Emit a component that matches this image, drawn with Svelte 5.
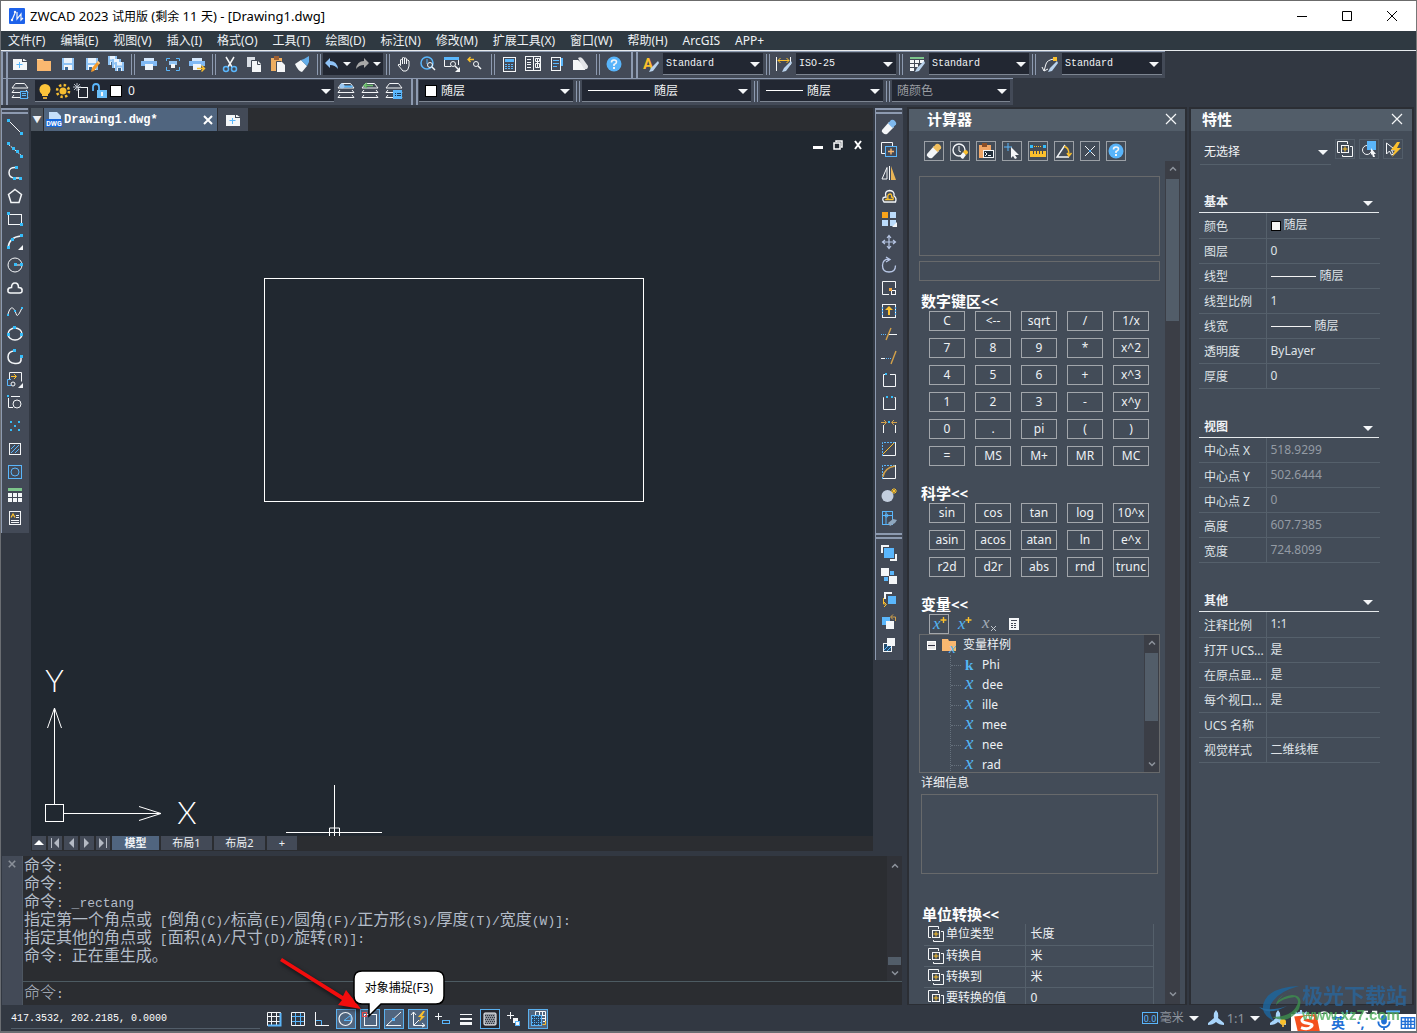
<script>
  const W = '#f4f6f8', B = '#5ab6fb', C = '#36bdfa', Y = '#fbc02d', O = '#f9b870', D = '#434a57';
  const r = (x, y, w, h, fill) => `<rect x="${x}" y="${y}" width="${w}" height="${h}" fill="${fill}"/>`;
  const b = (x, y, w, h, stroke, fill = 'none') => `<rect x="${x + 0.5}" y="${y + 0.5}" width="${w - 1}" height="${h - 1}" stroke="${stroke}" fill="${fill}"/>`;
  const p = (d, stroke = W, w = 1, extra = '') => `<path d="${d}" stroke="${stroke}" stroke-width="${w}" fill="none" ${extra}/>`;
  const f = (d, fill = W) => `<path d="${d}" fill="${fill}"/>`;
  const c = (x, y, rad, stroke = 'none', fill = 'none', w = 1) => `<circle cx="${x}" cy="${y}" r="${rad}" stroke="${stroke}" fill="${fill}" stroke-width="${w}"/>`;
  const dot = (x, y, fill = C) => r(x, y, 3, 3, fill);
  const disk = (x, y, s) => f(`M${x} ${y}h${s}v${s}h-${s}z`, '#8fc3f5') + r(x + 2, y, s - 4, s / 2 - 1, '#e8f2fc') + r(x + 2, y + s / 2 + 1, s - 4, s / 2 - 1, W) + r(x + 3, y + s - 3, 3, 3, '#3c6a99');
  const eraser = (a, z) => f('M1 11L8 3L13 8L6 15Q4 16 2 14Q0 12.500 1 11z', a) + f('M7 4.500L10 1Q12 0 14 2Q16 4 15 5.500L11.500 9z', z);
  const lens = (x, y) => c(x, y, 2.5, W) + p(`M${x + 2} ${y + 2}l3 3`, W, 1.4);
  const printer = r(3, 2, 10, 3, '#d5e7fb') + r(0, 5, 16, 5, '#80b9f5') + r(4, 8, 8, 6, '#edf4fc');
  const layers = f('M3 0h10l4 6H-1z', D) + p('M3.500 .5h9l3.500 4.500H0zM2 7L0 9.500h16L14 7M2 12l-2 2.500h16L14 12');
  const brush = f('M15 5l1 2-6 8-4 1 2-4z', '#b9d2ec');
  const multi = p('M3 11.500H.5v-11h10V3') + b(4, 4, 8, 8, W) + p('M13 5.500h2.500v10h-10V14') + p('M8 5.500v5M5.500 8h5', Y);
  const grid = (col) => p('M1.500 1.500h13v13h-13zM5.500 1v14M10.500 1v14M1 5.500h14M1 10.500h14', col);
  const help = c(8, 8, 7.500, 'none', '#58b4fa') + p('M5.500 6.500Q5.500 4 8 4Q10.500 4 10.500 6Q10.500 7.500 8 8.500V10', W, 1.6) + r(7, 11, 2, 2, W);
  const bolt = f('M12 1L6 9h4l-3 7 9-9h-4l3-6z', Y);
  const anno = f('M8 0q3 3 2 8l6 5v2q-5 0-8-3-3 3-8 3v-2l6-5Q5 3 8 0z', '#a8d4fa');

  const icons = {
    logo: `<rect width="16" height="16" rx="1" fill="#1d62ea"/>` + p('M3 12L6 5M8 4v7l4-5v6l2-2', W, 1.200) + c(6, 4, 1.200, 'none', W) + c(3, 12, 1.200, 'none', W),
    new: f('M1 3h9v3h5v8H1z') + f('M11 3h1l3 2h-4z') + p('M7.500 6v6M4.500 8.500h6', B),
    open: f('M1 3h6l1 2h7v10H1z', O) + r(1, 3, 5, 1, '#ffdca5'),
    save: disk(2, 2, 12),
    saveas: disk(2, 2, 12) + f('M14 5l2 2-6 8-3 1 1-4z', '#f49b2c') + f('M14 5l2 2-1 1-2-2z', '#fbd5a2'),
    saveall: disk(0, 0, 9) + disk(4, 3, 9) + disk(7, 6, 9),
    print: printer,
    preview: p('M1.500 5V2.500H5M11 2.500h3.500V5M14.500 11v3.500H11M5 14.500H1.500V11', B) + r(4, 5, 8, 4, '#8fc3f5') + r(6, 8, 4, 4, W),
    plot: printer + p('M8 12.500h7M12.500 9.500l3 3-3 3', Y, 1.4),
    cut: p('M4 1l6 10M12 1L6 11', W, 1.5) + c(4, 13, 2.500, B, 'none', 1.5) + c(12, 13, 2.500, B, 'none', 1.5),
    copy: f('M1 1h8v10H1z', '#d9dee5') + f('M6 5h6l3 3v8H6z') + p('M5.500 12V4.500h7M11.500 5v3.500h3', D),
    paste: f('M1 2h11v13H1z', '#edae61') + r(4, 0, 5, 4, '#9d5f33') + f('M7 6h5l3 3v7H7z') + p('M6.500 15V5.500h5', D),
    match: f('M1 8l6-4 6 6-5 6q-4-1-7-8z') + f('M7 4l3-1 5-3v6l-2 4z', '#64aeea'),
    undo: f('M1 7l5-5v3q7 0 8 8-3-4-8-4v3z', '#8fc3f7'),
    redo: f('M15 7l-5-5v3Q3 5 2 13q3-4 8-4v3z', '#a8a8a8'),
    down: f('M3 6h10l-5 5z'),
    drop: f('M4 6h8l-4 4z'),
    hand: p('M4.500 9.500V4Q5.500 2 6.500 4V8M6.500 7V2Q7.500 0 8.500 2V8M8.500 7V2.500Q10 1 10.500 3V8M10.500 7V4.500Q12 3 13 5V10Q12 15 10 15H7L2 9Q3 7 4.500 9.500'),
    zoomrt: c(7, 7, 6, B, 'none', 1.500) + p('M7 3v5', B) + lens(10, 9),
    zoomwin: r(0, 1, 15, 3, B) + p('M.5 4v6.500H7M14.500 4v5') + lens(9, 8) + f('M16 11v5h-5z'),
    zoomprev: p('M6 3.500H0M2.500 1L0 3.500 2.500 6', Y, 1.300) + lens(8, 8),
    props: b(2, 1, 13, 15, W) + r(4, 3, 9, 3, B) + p('M4 8.500h9M4 10.500h9M4 12.500h9', B, 1, 'stroke-dasharray="2 1"'),
    design: b(0, 0, 16, 15, W) + p('M8.500 0v15M2 3.500h4M2 6.500h4M2 8.500h4M2 11.500h4') + p('M10.500 2.500h4v3h-4zM10.500 7.500h4v4h-4zM12.500 2v10'),
    palette: b(2, 1, 10, 14, W) + r(12, 2, 2, 8, B) + p('M4 4.500h6M4 7.500h6M4 10.500h4', B),
    sheet: f('M0 4h5l7 6v4H0z') + f('M5 2q3-2 5 1l5 7q0 4-4 3z', '#e2e4e8'),
    help,
    textstyle: `<text x="0" y="13" font-size="15" font-weight="bold" font-family="Roboto" fill="${Y}">A</text>` + brush,
    dim: p('M.5 1v14M14.500 1v8') + p('M2 4.500h11M4.500 2L2 4.500 4.500 7M10.500 2l2.500 2.500L10.500 7', Y) + brush,
    tablestyle: r(1, 1, 14, 2, '#7dc58b') + r(1, 4, 4, 3, W) + r(6, 4, 4, 3, W) + r(11, 4, 4, 3, W) + r(1, 8, 4, 3, W) + r(6, 8, 3, 3, W) + r(1, 12, 4, 3, W) + brush,
    leader: p('M2 15L4 8Q5 4 12 3M0 11l2 4 4-2') + r(11, 1, 4, 4, Y) + brush,
    layerprops: layers + b(8, 8, 8, 8, B, '#31465c') + p('M10 10.500h4M10 12.500h4', B),
    layercur: layers + p('M2.500 3.500h12', B, 2) + c(4, 3, 2.500, 'none', '#9cc7ef'),
    layerprev: layers + p('M11 2.500H2M5 0L2 2.500 5 5', '#6cc06c', 1.400),
    layerstate: layers + r(7, 7, 9, 9, B) + p('M9 10.500h1M11 10.500h4M9 12.500h1M11 12.500h4', '#173a5a'),
    bulb: c(8, 6.500, 5.500, 'none', '#fdc43a') + r(5, 10, 6, 3, '#fdc43a') + r(6, 14, 4, 2, '#d9a53a'),
    sun: c(8, 8, 3.500, 'none', '#f6bd31') + c(8, 8, 6, '#f6bd31', 'none', 2.500).replace('/>', ' stroke-dasharray="2.400 2.300"/>'),
    freeze: b(5, 4, 10, 11, W) + p('M4 0v8M0 4h8M1 1l6 6M7 1L1 7', '#b8bec8'),
    lock: p('M2 8V4Q2 1 5 1T8 4V8', B, 1.800) + r(6, 7, 10, 8, '#6cc0fa') + r(10, 9, 2, 4, W),
    dwg: f('M3 0h8l4 4v8H3z', '#c5e0fb') + r(0, 7, 16, 8, '#1667dc') + `<text x="8" y="13.500" text-anchor="middle" font-size="7" font-weight="bold" font-family="Roboto" fill="#fff">DWG</text>`,
    line: p('M2 2l12 12') + dot(0, 0) + dot(13, 13),
    xline: p('M1 2l14 12', W, 1, 'stroke-dasharray="3 1"') + dot(0, 0) + dot(5, 5) + dot(9, 8) + dot(13, 13),
    pline: p('M9 2.500Q2 2 2 7.500T8 13h6', W, 1.500) + dot(8, 1) + dot(6, 12) + dot(12, 12),
    polygon: p('M8 1.500l6.500 5-2.500 8H4l-2.500-8z', W, 1.500),
    rect: b(1, 3, 14, 11, W) + dot(0, 1) + dot(13, 12),
    arc: p('M1 14Q2 3 14 2', W, 1.500) + dot(0, 12) + dot(4, 4) + dot(13, 0) + f('M16 11v5h-5z'),
    circle: c(8, 8, 7, W) + p('M8 8h6') + dot(7, 6) + dot(13, 6),
    cloud: p('M3.500 13Q.5 13 1 10 1 7.500 4.500 7.500 4.500 3 8 3T11.500 7.500Q15 7.500 15 10 15.500 13 12.500 13z', W, 1.600),
    spline: p('M1 11Q3 4 5.500 5T9 10.500 13 9L15 5', W) + r(0, 11, 2, 2, C) + r(7, 7, 2, 2, C) + r(14, 4, 2, 2, C),
    ellipse: `<ellipse cx="8" cy="8" rx="7" ry="6" stroke="${W}" fill="none" stroke-width="1.500"/>` + dot(6, 0) + dot(0, 7) + dot(13, 7),
    earc: p('M8 2Q1 2 1 8T8 14.500 14 9', W, 1.500) + dot(6, 0) + dot(13, 6),
    insert: p('M2.500 7V.5h12v9') + p('M4 4.500h5M7 2l2.500 2.500L7 7', Y) + p('M4 7.500H.5v6H4', B) + c(6, 12, 2, W) + f('M16 11v5h-5z'),
    block: p('M1.500 3v9.500H6M4 1.500h9') + r(0, 0, 2, 2, C) + c(10, 9, 4, W),
    points: r(3, 3, 2, 2, C) + r(11, 3, 2, 2, C) + r(7, 7, 2, 2, C) + r(3, 11, 2, 2, C) + r(11, 11, 2, 2, C),
    hatch: b(2, 2, 12, 12, W) + p('M4 8l4-4M4 12l8-8M8 12l4-4', B),
    region: b(1, 1, 14, 14, B) + c(8, 8, 4, B),
    table: r(1, 1, 14, 3, '#7dc58b') + [5, 10].map(y => [1, 6, 11].map(x => r(x, y + 1, 4, 4, W)).join('')).join(''),
    mtext: b(2, 1, 12, 14, W) + p('M4 7.500l2-3.500 2 3.500', Y, 1.300) + p('M9 5.500h3M9 7.500h3M4 10.500h8M4 12.500h8'),
    erase: eraser(W, '#7fb9ee'),
    copyobj: p('M4 11.500H.5v-11h11V4') + b(4, 4, 12, 11, B) + p('M10 6.500v6M7 9.500h6', O, 1.400),
    mirror: p('M6 2.500v11.500H1z') + p('M8.500 1v14') + f('M10 1v14h5z', '#e9b456'),
    offset: p('M3 14Q1 12 2 10 3 9 5 9 3 3 8.500 2.500 14 3 13 8 16 10 14.500 14z', W, 1.300) + p('M5 11.500Q6 10.500 7 11 6 6 9 6 11 6 10.500 9 13 9 12 11.500z', Y, 1.300),
    array: r(1, 1, 6, 6, '#faa41a') + r(9, 1, 6, 6, '#bcdcfb') + r(1, 9, 6, 6, '#bcdcfb') + r(9, 9, 6, 6, '#bcdcfb') + f('M16 11v5h-5z'),
    move: p('M8 2v12M2 8h12M6 4l2-2.500L10 4M6 12l2 2.500 2-2.500M4 6L1.500 8 4 10M12 6l2.500 2L12 10', '#b8c7e6', 1.200),
    rotate: p('M8 2Q1.500 2 1.500 8.500T8 15 14.500 8.500M5 0l4 2.500L5 5', '#b8c7e6', 1.300),
    scale: p('M8 14.500H1.500v-13h13V8') + b(10, 10, 5, 5, W) + dot(8, 8, '#f5a945'),
    stretch: b(1, 1, 14, 14, W) + p('M1.500 4v8M14.500 4v8', B, 1.200, 'stroke-dasharray="2 1"') + f('M8 3l4 4H9v5H7V7H4z', Y),
    trim: p('M0 8.500h6', B, 1, 'stroke-dasharray="1 1"') + p('M8 8.500h8') + p('M5 14L10 2', '#d4a24a', 1.400),
    extend: p('M0 9.500h4') + p('M5 9.500h6', B, 1, 'stroke-dasharray="1 1"') + p('M10 15l5-13', '#d4a24a', 1.400),
    break1: p('M4 2.500H2.500v12h12v-12H9') + r(4, 1, 2, 2, C),
    break2: p('M3 2.500h-.5v12h12v-12h-1') + r(5, 1, 2, 2, C) + r(10, 1, 2, 2, C),
    join: p('M2.500 15V7M14.500 15V7') + p('M0 4.500h5M3 2l2.500 2.500L3 7M16 4.500h-5M13 2l-2.500 2.500L13 7', '#d4a24a') + r(7, 3, 2, 2, C),
    chamfer: p('M1.500 15V1.500H15', B, 1, 'stroke-dasharray="2 1"') + p('M14.500 1v13.500H2') + p('M2 13L13 2', Y),
    fillet: p('M1.500 15V1.500H15', B, 1, 'stroke-dasharray="2 1"') + p('M14.500 1v13.500H2') + p('M2 13Q3 4 14 2', '#d4a24a', 1.400),
    explode: c(6.500, 9, 6, 'none', '#c3cede') + p('M13 1v6M10 4h6M11 2l4 4M15 2l-4 4', Y),
    pedit: b(1, 1, 11, 14, B) + p('M5 1v14M1 5.500h11', B) + c(5.500, 5.500, 1.500, B) + f('M7 13l5-4 4 1-2 3-5 3z', '#8fa7be'),
    front: p('M1 8V1h7', W, 2) + p('M15 9v6H9', W, 2) + r(3, 3, 10, 10, B),
    back: r(0, 0, 8, 8, W) + r(9, 3, 4, 4, B) + r(3, 9, 4, 4, B) + r(8, 8, 8, 8, W),
    above: p('M4 8V2h7', W, 2) + r(7, 5, 8, 8, B) + p('M2.500 7v6H5M3 11l2.500 2.500L3 16', Y),
    under: r(1, 3, 8, 8, B) + r(5, 7, 8, 8, W) + p('M14.500 7V3H10M12 .5L9.500 3 12 5.500', '#d4a24a'),
    hatchback: b(2, 6, 9, 9, W, '#244a6b') + p('M3 13l6-6M6 14l4-4', B) + r(6, 1, 8, 8, W),
    clear: eraser(W, '#f0bf5e'),
    history: c(7, 7, 6, W, 'none', 1.400) + p('M7 3v5l2 1') + f('M8 13l3-4 3 3-3 4q-2 0-3-3z') + f('M11 9l2-2q3 0 3 3l-2 2z', Y),
    pastecalc: f('M1 2h12v13H1z', '#f3a766') + r(4, 0, 5, 4, '#8d4f26') + b(5, 7, 11, 8, W, '#24303c') + p('M7 9l2 2-2 2M10 12.500h3'),
    getpoint: p('M4 0v8M0 4h8', B) + f('M7 4l8 8h-4l2 3-2 1-2-3-2 2z'),
    distance: dot(0, 2) + dot(13, 2) + p('M4 3.500h8', Y, 1, 'stroke-dasharray="1 1"') + r(0, 8, 16, 6, Y) + p('M3.500 8v3M6.500 8v3M9.500 8v3M12.500 8v3', D),
    angle: p('M9 2L1 14h12', W, 1.400) + p('M8 3.500Q13 4 13 12M11 10l2 3 2.500-3', Y, 1.400),
    intersect: p('M3 3l10 10M13 3L3 13') + r(7, 7, 2, 2, B),
    x: p('M3 3l10 10M13 3L3 13', W, 1.200),
    xp: `<text x="2" y="13" font-size="17" font-style="italic" font-family="Liberation Serif" fill="#53b6f4">x</text>` + p('M12.500 1v6M9.500 4h6', Y, 1.400),
    xx: `<text x="1" y="12" font-size="17" font-style="italic" font-family="Liberation Serif" fill="#a4adb8">x</text>` + p('M10 10l5 5M15 10l-5 5', '#c1c6cc'),
    calc: r(3, 2, 10, 12, W) + r(5, 4, 6, 1, D) + p('M5 7.500h6M5 9.500h6M5 11.500h6', D, 1, 'stroke-dasharray="2 1"'),
    varfolder: f('M0 2h6l1 2h7v10H0z', O) + `<text x="7" y="16" font-size="15" font-style="italic" font-family="Liberation Serif" fill="#53b6f4">x</text>`,
    multi,
    pick: c(6, 9, 4.500, W, D) + r(6, 0, 9, 9, B) + f('M10 7l5 6h-2l1 3-2 0-1-3-1 1z'),
    quick: p('M1.500 2v11l3-3 2 4 2-1-2-4h4z') + bolt,
    snap: grid(W) + p('M14.500 2v12.500H2', B, 2),
    grid: grid(W) + p('M5.500 2v12M10.500 2v12M2 5.500h12M2 10.500h12', B),
    ortho: p('M1.500 1v13.500H15') + p('M2 9.500h5.500V14', B),
    polar: c(7.500, 8, 6.500, W, 'none', 1.200) + p('M6 9.500l7-5.500v5.500z', B),
    osnap: b(2, 3, 13, 12, W) + b(0, 1, 5, 5, '#e84b4b'),
    otrack: p('M0 14.500h15M1 14L15 1') + r(6, 7, 3, 3, B),
    ducs: p('M3.500 1v13.500H15M1 4l2.500-3L6 4M12 12l3 2.500-3 1.500M4 14l5-5') + f('M13 0L8 6h3l-2 5 6-6h-3l3-5z', Y),
    dyn: p('M4.500 2v7M1 5.500h7') + b(8, 9, 8, 4, B),
    lwt: r(2, 3, 12, 1, W) + r(2, 7, 12, 2, W) + r(2, 11, 12, 3, W),
    transp: `<rect x="2" y="2" width="12" height="12" rx="1" fill="#8b929a" stroke="${W}"/>` + [4, 6, 8, 10, 12].map(y => p(`M${3 + (y / 2) % 2} ${y}.5h10`, '#303640', 1, 'stroke-dasharray="1 1"')).join(''),
    cycle: p('M4.500 1v7M1 4.500h7') + r(7, 7, 5, 5, W) + b(9, 10, 5, 5, B, W),
    model: p('M5.500 4V.5h10v10H13M9.500 1v3M12.500 1v3M12 4.500h4M12 7.500h4') + b(1, 4, 11, 11, B, '#2a4867') + p('M4.500 5v9M8.500 5v9M2 7.500h9M2 11.500h9', B, 1, 'stroke-dasharray="1 1"') + p('M15.500 10v3.500h-3', Y),
    units: b(0, 2, 16, 12, B) + `<text x="8" y="12" text-anchor="middle" font-size="9" font-family="Roboto" fill="${B}">0.0</text>`,
    anno,
    annolamp: anno + c(13, 12, 3, 'none', Y) + r(12, 15, 2, 2, '#d9a53a'),
    gear: c(8, 8, 5, '#a8d4fa', 'none', 3) + p('M8 0v3M2 2l2 2M14 2l-2 2', '#a8d4fa', 2),
    ring: c(8, 8, 6, W, 'none', 1.500),
    rays: c(8, 9, 4, 'none', B) + p('M8 0v4M3 2l2 3M13 2l-2 3', B, 1.500),
    full: p('M1.500 6V1.500H6M10 1.500h4.500V6M2 2l4 4M14 2l-4 4', W, 1.500),
    bars: p('M1 1.500h14M1 5.500h14', B, 2),
    up: p('M5 9.500l3-3 3 3', '#8d939c', 1.500),
    dn: p('M5 6.500l3 3 3-3', '#8d939c', 1.500)
  };

  const title = 'ZWCAD 2023 试用版 (剩余 11 天) - [Drawing1.dwg]';
  const menus = ['文件(F)', '编辑(E)', '视图(V)', '插入(I)', '格式(O)', '工具(T)', '绘图(D)', '标注(N)', '修改(M)', '扩展工具(X)', '窗口(W)', '帮助(H)', 'ArcGIS', 'APP+'];
  const barA = ['new', 'open', 'save', 'saveas', 'saveall', '|', 'print', 'preview', 'plot', '|', 'cut', 'copy', 'paste', 'match', '|', '*', '|', 'hand', 'zoomrt', 'zoomwin', 'zoomprev', '|', 'props', 'design', 'palette', 'sheet', '|', 'help'];
  const styles = [['textstyle', 'Standard', '文字样式'], ['dim', 'ISO-25', '标注样式'], ['tablestyle', 'Standard', '表格样式'], ['leader', 'Standard', '引线样式']];
  const drawTools = ['line', 'xline', 'pline', 'polygon', 'rect', 'arc', 'circle', 'cloud', 'spline', 'ellipse', 'earc', 'insert', 'block', 'points', 'hatch', 'region', 'table', 'mtext'];
  const modTools = ['erase', 'copyobj', 'mirror', 'offset', 'array', 'move', 'rotate', 'scale', 'stretch', 'trim', 'extend', 'break1', 'break2', 'join', 'chamfer', 'fillet', 'explode', 'pedit'];
  const orderTools = ['front', 'back', 'above', 'under', 'hatchback'];
  const log = ['命令:', '命令:', '命令: _rectang', '指定第一个角点或 [倒角(C)/标高(E)/圆角(F)/正方形(S)/厚度(T)/宽度(W)]:', '指定其他的角点或 [面积(A)/尺寸(D)/旋转(R)]:', '命令: 正在重生成。'];
  const runs = (s) => s.match(/[\x20-\x7e]+|[^\x20-\x7e]+/g).map((t) => ({ t, latin: /^[\x20-\x7e]/.test(t) }));
  const calcTools = ['clear', 'history', 'pastecalc', 'getpoint', 'distance', 'angle', 'intersect', 'help'];
  const numKeys = ['C', '<--', 'sqrt', '/', '1/x', '7', '8', '9', '*', 'x^2', '4', '5', '6', '+', 'x^3', '1', '2', '3', '-', 'x^y', '0', '.', 'pi', '(', ')', '=', 'MS', 'M+', 'MR', 'MC'];
  const sciKeys = ['sin', 'cos', 'tan', 'log', '10^x', 'asin', 'acos', 'atan', 'ln', 'e^x', 'r2d', 'd2r', 'abs', 'rnd', 'trunc'];
  const vars = ['Phi', 'dee', 'ille', 'mee', 'nee', 'rad'];
  const units = [['单位类型', '长度'], ['转换自', '米'], ['转换到', '米'], ['要转换的值', '0']];
  const groups = [
    { name: '基本', rows: [['颜色', '随层', 'sw'], ['图层', '0'], ['线型', '随层', 'ln'], ['线型比例', '1'], ['线宽', '随层', 'ls'], ['透明度', 'ByLayer'], ['厚度', '0']] },
    { name: '视图', dim: true, rows: [['中心点 X', '518.9299'], ['中心点 Y', '502.6444'], ['中心点 Z', '0'], ['高度', '607.7385'], ['宽度', '724.8099']] },
    { name: '其他', rows: [['注释比例', '1:1'], ['打开 UCS...', '是'], ['在原点显...', '是'], ['每个视口...', '是'], ['UCS 名称', ''], ['视觉样式', '二维线框']] }
  ];
  const status = [['snap', 0], ['grid', 0], ['ortho', 0], ['polar', 1], ['osnap', 1], ['otrack', 1], ['ducs', 1], ['dyn', 0], ['lwt', 0], ['transp', 2], ['cycle', 0], ['model', 1]];
</script>

{#snippet icon(name)}
  <svg class="ic" viewBox="0 0 16 16" aria-hidden="true">{@html icons[name]}</svg>
{/snippet}

{#snippet tool(name)}
  <button class="tool" aria-label={name}>{@render icon(name)}</button>
{/snippet}

{#snippet combo(label, value, cls, lead)}
  <label class="combo {cls}">
    {#if lead}<span class={lead}></span>{/if}
    <select aria-label={label}><option>{value}</option></select>
    {@render icon('down')}
  </label>
{/snippet}

<div class="app">
  <header class="title">
    {@render icon('logo')}
    <h1>{#each runs(title) as s}<span class:wide={s.latin}>{s.t}</span>{/each}</h1>
    <button aria-label="最小化"><svg viewBox="0 0 12 12"><path d="M1 6.500h10" /></svg></button>
    <button aria-label="最大化"><svg viewBox="0 0 12 12"><path d="M1.500 1.500h9v9h-9z" /></svg></button>
    <button aria-label="关闭"><svg viewBox="0 0 12 12"><path d="M1 1l10 10M11 1L1 11" /></svg></button>
  </header>
  <nav class="menu">
    {#each menus as m}<button>{m}</button>{/each}
  </nav>

  <div class="row">
    <div class="bar main">
      <i class="grip"></i>
      {#each barA as t}
        {#if t === '|'}<i class="sep"></i>
        {:else if t === '*'}
          <span class="history">
            <button aria-label="撤销">{@render icon('undo')}</button><button class="drop" aria-label="撤销列表">{@render icon('drop')}</button>
            <button aria-label="重做">{@render icon('redo')}</button><button class="drop" aria-label="重做列表">{@render icon('drop')}</button>
          </span>
        {:else}{@render tool(t)}{/if}
      {/each}
    </div>
    <div class="bar">
      <i class="grip"></i>
      {#each styles as [ic, v, label], i}
        {#if i}<i class="sep"></i>{/if}
        {@render tool(ic)}
        {@render combo(label, v, 'mono', '')}
      {/each}
    </div>
  </div>

  <div class="row">
    <div class="bar main">
      <i class="grip"></i>
      {@render tool('layerprops')}
      <label class="combo layer">
        {@render icon('bulb')}{@render icon('sun')}{@render icon('freeze')}{@render icon('lock')}
        <span class="swatch"></span>
        <select aria-label="图层"><option>0</option></select>
        {@render icon('down')}
      </label>
      {@render tool('layercur')}{@render tool('layerprev')}{@render tool('layerstate')}
    </div>
    <div class="bar">
      <i class="grip"></i>
      {@render combo('颜色', '随层', 'color', 'swatch')}
      <i class="sep"></i>
      {@render combo('线型', '随层', 'ltype', 'rule long')}
      <i class="sep"></i>
      {@render combo('线宽', '随层', 'lweight', 'rule')}
      <i class="sep"></i>
      {@render combo('打印样式', '随颜色', 'plot', '')}
    </div>
  </div>

  <div class="work">
    <div class="left">
      <div class="editor">
        <div class="vbar">
          <i class="vgrip"></i>
          {#each drawTools as t}{@render tool(t)}{/each}
        </div>
        <main class="doc">
          <div class="doctabs">
            <button class="list" aria-label="文档列表">▼</button>
            <div class="doctab">
              {@render icon('dwg')}<span>Drawing1.dwg*</span>
              <button aria-label="关闭文档"><svg viewBox="0 0 10 10"><path d="M1 1l8 8M9 1L1 9" /></svg></button>
            </div>
            <button class="add" aria-label="新建文档">{@render icon('new')}</button>
          </div>
          <div class="canvas">
            <svg class="scene" aria-label="Drawing1">
              <rect x="233.5" y="147.5" width="379" height="223" />
              <rect x="14.500" y="673.5" width="18" height="17" />
              <path d="M23.500 673V577M16.500 597L23.500 577L30.500 597M33 682.500H130M108 675.500L130 682.500L108 689.500" />
              <text x="23.500" y="561" text-anchor="middle">Y</text>
              <text x="156" y="693" text-anchor="middle">X</text>
              <path d="M303.500 654v43M255 701.500h96M303.500 697v9M298.500 706v-9h10v9" />
            </svg>
            <div class="mdi">
              <button aria-label="最小化文档"><svg viewBox="0 0 10 10"><path d="M0 7.500h10" stroke-width="3" /></svg></button>
              <button aria-label="还原文档"><svg viewBox="0 0 10 10"><path d="M3 2V1h6v6H8M1 3h6v6H1z" stroke-width="1.500" /></svg></button>
              <button aria-label="关闭文档窗口"><svg viewBox="0 0 10 10"><path d="M2 1l6 8M8 1L2 9" stroke-width="2" /></svg></button>
            </div>
          </div>
          <div class="layouts">
            <button aria-label="布局列表"><svg viewBox="0 0 12 12"><path d="M1 8h10L6 3z" fill="#fff" /></svg></button>
            <button aria-label="第一个"><svg viewBox="0 0 12 12"><path d="M2 1h1v10H2zM10 1v10L5 6z" /></svg></button>
            <button aria-label="上一个"><svg viewBox="0 0 12 12"><path d="M9 1v10L4 6z" /></svg></button>
            <button aria-label="下一个"><svg viewBox="0 0 12 12"><path d="M3 1v10l5-5z" /></svg></button>
            <button aria-label="最后一个"><svg viewBox="0 0 12 12"><path d="M9 1h1v10H9zM2 1v10l5-5z" /></svg></button>
            <button class="lt on">模型</button><button class="lt">布局1</button><button class="lt">布局2</button><button class="lt plus">+</button>
          </div>
        </main>
        <div class="vbar right">
          <i class="vgrip"></i>
          {#each modTools as t}{@render tool(t)}{/each}
          <i class="vgrip second"></i>
          {#each orderTools as t}{@render tool(t)}{/each}
        </div>
      </div>

      <section class="cmd">
        <div class="strip"><button aria-label="关闭命令行"><svg viewBox="0 0 10 10"><path d="M1 1l8 8M9 1L1 9" /></svg></button></div>
        <div class="cmdbody">
          <div class="logwrap">
            <div class="log">
              {#each log as line}
                <p>{#each runs(line) as s}<span class:latin={s.latin}>{s.t}</span>{/each}</p>
              {/each}
            </div>
            <div class="scroll cs">{@render icon('up')}<i></i>{@render icon('dn')}</div>
          </div>
          <label class="prompt"><span>命令<span class="latin">:</span></span><input aria-label="命令" /></label>
        </div>
      </section>
    </div>

    <aside class="panel calcp">
      <header><h2>计算器</h2><button aria-label="关闭计算器">{@render icon('x')}</button></header>
      <div class="calcrow">
        <div class="calc">
          <div class="ctools">{#each calcTools as t}<button aria-label={t}>{@render icon(t)}</button>{/each}</div>
          <textarea class="display" aria-label="历史"></textarea>
          <input class="entry" aria-label="输入" />
          <h3>数字键区&lt;&lt;</h3>
          <div class="keys">{#each numKeys as k}<button>{k}</button>{/each}</div>
          <h3 class="sci">科学&lt;&lt;</h3>
          <div class="keys">{#each sciKeys as k}<button>{k}</button>{/each}</div>
          <h3 class="sci">变量&lt;&lt;</h3>
          <div class="vtools">
            <button class="on" aria-label="新建变量">{@render icon('xp')}</button><button aria-label="编辑变量">{@render icon('xp')}</button><button aria-label="删除变量">{@render icon('xx')}</button><button aria-label="返回">{@render icon('calc')}</button>
          </div>
          <div class="tree">
            <div class="nodes">
              <div class="root"><button aria-label="折叠"></button>{@render icon('varfolder')}<span>变量样例</span></div>
              <ul>
                {#each vars as v, i}<li><b class:k={i === 0}>{i === 0 ? 'k' : 'x'}</b>{v}</li>{/each}
              </ul>
            </div>
            <div class="scroll ts">{@render icon('up')}<i></i>{@render icon('dn')}</div>
          </div>
          <label class="detail"><span>详细信息</span><textarea></textarea></label>
          <h3 class="unit">单位转换&lt;&lt;</h3>
          <table class="units">
            <tbody>
              {#each units as [k, v]}<tr><th scope="row"><span>{@render icon('multi')}{k}</span></th><td>{v}</td></tr>{/each}
            </tbody>
          </table>
        </div>
        <div class="scroll ps">{@render icon('up')}<i></i>{@render icon('dn')}</div>
      </div>
    </aside>

    <aside class="panel props">
      <header><h2>特性</h2><button aria-label="关闭特性">{@render icon('x')}</button></header>
      <div class="sel">
        <label class="combo pick"><select aria-label="选择对象"><option>无选择</option></select>{@render icon('down')}</label>
        <button aria-label="切换">{@render icon('multi')}</button><button aria-label="选择">{@render icon('pick')}</button><button aria-label="快速选择">{@render icon('quick')}</button>
      </div>
      {#each groups as g}
        <button class="ghead">{g.name}{@render icon('down')}</button>
        <table class="ptable" class:dim={g.dim}>
          <tbody>
            {#each g.rows as [k, v, lead]}
              <tr><th scope="row">{k}</th><td>{#if lead}<i class={lead}></i>{/if}{v}</td></tr>
            {/each}
          </tbody>
        </table>
      {/each}
    </aside>
  </div>

  <footer class="status">
    <output>417.3532, 202.2185, 0.0000</output>
    <div class="toggles">
      {#each status as [s, mode]}
        <button class:on={mode === 1} class:dark={mode === 2} aria-label={s}>
          {@render icon(s)}
          {#if s === 'osnap'}
            <span class="tip">
              <svg viewBox="0 0 92 48"><path d="M9 1h74q8 0 8 8v17q0 8-8 8H28L16 46V34H9q-8 0-8-8V9q0-8 8-8z" fill="#fff" stroke="#000" stroke-width="1.500" /></svg>
              <span>对象捕捉(F3)</span>
            </span>
            <svg class="pointer" viewBox="0 0 90 60"><path d="M4 3L2 6L64 45L60 50L83 54L68 35L65 41z" fill="#f20d0d" /></svg>
          {/if}
        </button>
      {/each}
    </div>
    <div class="end">
      {@render icon('units')}<span>毫米</span>{@render icon('down')}
      <span class="scale">{@render icon('anno')}<span class="ratio">1:1</span></span>{@render icon('down')}
      <span class="more">{@render icon('annolamp')}{@render icon('gear')}{@render icon('ring')}{@render icon('rays')}{@render icon('full')}{@render icon('bars')}</span>
    </div>
    <div class="ime">
      <svg class="sogou" viewBox="0 0 32 20"><path d="M1 3L27 0l4 20H5z" fill="#f4511e" /><path d="M24 5Q12 2 10 7q0 3 7 4 7 1 4 4-4 4-12 1" stroke="#fff" stroke-width="3.500" fill="none" /></svg>
      <span>英</span><span class="punct">·,</span>
      <svg viewBox="0 0 16 18"><rect x="5" y="1" width="6" height="10" rx="3" fill="#1f6fd6" /><path d="M2 8q0 6 6 6t6-6M8 14v3" stroke="#1f6fd6" stroke-width="2" fill="none" /></svg>
      <svg viewBox="0 0 16 18"><path d="M1 4h14v11H1zM1 8h14M1 11h14M5 4v11M8 4v11M11 4v11" stroke="#1f6fd6" stroke-width="1.500" fill="none" /></svg>
    </div>
    <div class="mark">
      <svg viewBox="0 0 44 40"><path d="M41 3Q14 4 7 17 0 30 16 38 8 26 15 18 22 8 41 3z" fill="#1c67a0" /><path d="M36 7Q20 12 18 22 24 15 37 14 42 17 39 22 34 34 14 34 31 42 41 26 46 12 34 12 26 13 20 18 26 9 36 7z" fill="#3d8f4e" /><path d="M1 24Q10 33 29 23 12 29 1 24z" fill="#2477b5" /></svg>
      <div><strong>极光下载站</strong><em>www.xz7.com</em></div>
    </div>
  </footer>
</div>

<style>
  :global(body) { margin: 0; background: #323842; }
  .app { box-sizing: border-box; display: flex; flex-direction: column; height: 100vh; border-top: 1px solid #6b6b6b; border-bottom: 2px solid #6a6d72; border-left: 1px solid #6a6d72; border-right: 1px solid #777; background: #323842; color: #eef1f4; font: 12px/16px "Noto Sans", "Noto Sans CJK SC", sans-serif; overflow: hidden; }
  .app *, .app *::before { box-sizing: border-box; }
  button { font: inherit; color: inherit; background: none; border: 0; padding: 0; margin: 0; display: flex; align-items: center; justify-content: center; }
  h1, h2, h3, p, ul { margin: 0; padding: 0; font-weight: normal; list-style: none; }
  input, textarea, select { font: inherit; color: inherit; background: none; border: 0; padding: 0; margin: 0; outline: 0; border-radius: 0; resize: none; appearance: none; min-width: 0; }
  .ic { width: 16px; height: 16px; flex: none; display: block; overflow: visible; }

  .title { display: flex; align-items: center; height: 30px; background: #fff; color: #000; padding: 0 2px 0 8px; flex: none; }
  .title h1 { flex: 1; font-size: 12px; padding-left: 5px; white-space: pre; }
  .wide { font-size: 13px; }
  .title button { width: 45px; height: 28px; }
  .title svg { width: 12px; height: 12px; stroke: #000; fill: none; }
  .title .ic, .title :global(.ic) { width: 16px; height: 16px; stroke: none; }
  .menu { display: flex; gap: 15px; height: 20px; padding-left: 7px; background: #2f3941; border-bottom: 1px solid #e8ebee; flex: none; }

  .row { display: flex; height: 27px; flex: none; }
  .bar { display: flex; align-items: center; background: #434a57; border-top: 1px solid #8d9ab0; padding: 0 3px 2px 0; }
  .bar.main { padding-right: 5px; }
  .grip { height: 26px; width: 7px; border: solid #8d9ab0; border-width: 0 2px; flex: none; margin: 0 1px -2px 0; }
  .bar.main .grip { margin-right: 0; }
  .sep { width: 9px; height: 21px; flex: none; display: flex; justify-content: center; padding-left: 1px; }
  .sep::before { content: ''; width: 4px; border: solid #8d9ab0; border-width: 0 1px; }
  .tool { width: 24px; height: 23px; flex: none; }
  .history { display: flex; width: 60px; height: 22px; background: #222732; align-items: center; }
  .history button { width: 18px; }
  .history .drop { width: 12px; }
  .combo { display: flex; align-items: center; height: 22px; background: #222732; border-bottom: 1px solid #7d8591; padding-left: 4px; color: #f0f2f4; }
  .combo select { flex: 1; line-height: 16px; }
  .combo.mono { width: 100px; font-family: "Liberation Mono", monospace; font-size: 10px; padding-left: 3px; }
  .combo.layer { width: 299px; gap: 2px; margin-left: 3px; padding-left: 2px; }
  .combo.layer select { padding-left: 0; }
  .combo.color { width: 154px; padding-left: 5px; }
  .combo.ltype { width: 169px; padding-left: 6px; }
  .combo.lweight { width: 123px; padding-left: 6px; }
  .combo.plot { width: 118px; padding-left: 5px; color: #9a9da3; }
  .swatch { width: 12px; height: 12px; background: #fff; border: 1px solid #000; margin: 0 4px 0 1px; flex: none; }
  .rule { width: 37px; height: 1px; background: #fff; margin-right: 4px; flex: none; }
  .rule.long { width: 62px; }

  .work { display: flex; flex: 1; padding-top: 2px; min-height: 0; }
  .left { flex: 1; display: flex; flex-direction: column; min-width: 0; }
  .editor { flex: 1; display: flex; padding: 1px 0 5px; min-height: 0; }
  .vbar { width: 28px; align-self: flex-start; display: flex; flex-direction: column; align-items: center; background: #434a57; border-left: 1px solid #8d9ab0; padding: 0 2px 4px 0; flex: none; }
  .vbar.right { margin-left: 2px; padding-right: 1px; }
  .vgrip { width: 26px; height: 6px; border: solid #8d9ab0; border-width: 2px 0; margin-bottom: 1px; flex: none; }
  .vgrip.second { margin: 4px 0 2px; }
  .doc { flex: 1; display: flex; flex-direction: column; min-width: 0; margin-left: 2px; background: #2b2d31; }
  .doctabs { display: flex; height: 23px; gap: 1px; }
  .list { width: 12px; background: #4c555f; font-size: 9px; }
  .doctab { display: flex; align-items: center; width: 173px; background: #50657f; padding: 0 4px 0 2px; font: bold 12px/16px "Liberation Mono", monospace; }
  .doctab span { flex: 1; padding-left: 2px; color: #fff; }
  .doctab button svg { width: 10px; height: 10px; stroke: #fff; stroke-width: 2; fill: none; }
  .add { width: 30px; background: #434a57; }
  .canvas { flex: 1; display: flex; position: relative; background: #212830; min-height: 0; }
  .scene { position: absolute; width: 100%; height: 100%; stroke: #fff; fill: none; }
  .scene text { font: 300 31px Lato, sans-serif; fill: #fff; stroke: none; }
  .mdi { margin-left: auto; display: flex; gap: 10px; padding: 9px 10px; align-self: flex-start; position: relative; }
  .mdi svg { width: 10px; height: 10px; stroke: #fff; fill: none; display: block; }
  .layouts { display: flex; gap: 2px; height: 15px; padding: 0 0 1px 1px; font-size: 11px; line-height: 14px; flex: none; }
  .layouts button { background: #434a57; width: 14px; }
  .layouts svg { width: 12px; height: 12px; fill: #b4bac4; }
  .layouts .lt { width: 51px; }
  .layouts .on { width: 47px; background: #50657f; font-weight: bold; }
  .layouts .plus { width: 30px; }

  .cmd { display: flex; height: 149px; background: #2b2d31; margin: 0 1px; flex: none; }
  .strip { width: 21px; background: #434a57; border-right: 1px solid #4d5661; padding: 4px 0 0 6px; }
  .strip svg { width: 8px; height: 8px; stroke: #8a9099; stroke-width: 2; display: block; }
  .cmdbody { flex: 1; display: flex; flex-direction: column; font: 300 16px/16px "Noto Sans CJK SC", sans-serif; color: #b3bcc8; }
  .logwrap { flex: 1; display: flex; border-bottom: 1px solid #4d5b62; }
  .log { flex: 1; padding-left: 1px; }
  .log p { height: 18px; white-space: pre; }
  .latin { font-family: "Liberation Mono", monospace; font-size: 13px; }
  .prompt { display: flex; height: 22px; padding-left: 1px; align-items: center; margin-bottom: 1px; }
  .prompt input { flex: 1; }

  .scroll { display: flex; flex-direction: column; align-items: center; background: #3b3e46; width: 15px; flex: none; }
  .scroll i { width: 13px; background: #525d69; margin-bottom: auto; flex: none; }
  .cs { background: #303238; padding-top: 2px; }
  .cs i { height: 8px; margin-top: auto; margin-bottom: 0; }
  .ts i { height: 68px; margin-top: 2px; }
  .ps i { height: 142px; margin-top: 2px; }
  .ps { padding-bottom: 2px; margin-top: 30px; }

  .panel { background: #434c58; border: 2px solid #2b2e34; border-bottom-width: 1px; display: flex; flex-direction: column; flex: none; overflow: hidden; }
  .calcp { width: 280px; margin-left: 4px; }
  .props { width: 225px; margin: 0 2px; }
  .panel header { display: flex; align-items: center; height: 22px; background: #525d69; padding: 0 6px 2px 18px; flex: none; }
  .props header { padding-left: 11px; padding-right: 7px; }
  h2 { flex: 1; font-size: 15px; line-height: 20px; font-weight: bold; color: #fff; }
  .calcrow { flex: 1; display: flex; padding: 0 5px 0 10px; min-height: 0; }
  .calc { flex: 1; display: flex; flex-direction: column; padding-right: 5px; overflow: hidden; }
  .calc > * { flex: none; }
  .ctools { display: flex; gap: 6px; padding: 10px 0 15px 5px; }
  .ctools button { width: 20px; height: 20px; border: 1px solid #9ba0a6; }
  .display { height: 80px; border: 1px solid #67696b; }
  .entry { height: 20px; margin-top: 5px; border: 1px solid #67696b; }
  h3 { font-size: 15px; line-height: 20px; font-weight: bold; color: #fff; padding: 10px 0 0 2px; }
  h3.sci { padding-top: 17px; }
  .keys { display: grid; grid-template-columns: repeat(5, 36px); gap: 7px 10px; padding-left: 10px; }
  .keys button { height: 20px; border: 1px solid #a2a6ab; }
  .vtools { display: flex; gap: 5px; padding-left: 10px; height: 20px; }
  .vtools button { width: 20px; border: 1px solid transparent; }
  .vtools .on { border-color: #a2a6ab; }
  .tree { display: flex; height: 139px; border: 1px solid #67696b; overflow: hidden; }
  .nodes { flex: 1; }
  .root { display: flex; align-items: center; height: 20px; padding-left: 7px; gap: 5px; }
  .root button { width: 9px; height: 9px; background: linear-gradient(#e8e8e8 0 3px, #334 3px 4px, #e8e8e8 4px); border: 1px solid #fff; margin-right: 1px; }
  .nodes ul { margin-left: 30px; border-left: 1px dotted #66717d; }
  .nodes li { display: flex; align-items: center; height: 20px; }
  .nodes li::before { content: ''; width: 10px; border-top: 1px dotted #66717d; }
  .nodes b { width: 21px; padding-left: 4px; font: italic 19px/14px "Liberation Serif", serif; color: #53b6f4; height: 18px; }
  .nodes b.k { font: bold 15px/18px "Liberation Serif", serif; }
  .detail { display: flex; flex-direction: column; padding: 2px 2px 0; }
  .detail textarea { height: 80px; border: 1px solid #67696b; margin-top: 3px; }
  h3.unit { padding-top: 30px; padding-left: 3px; }
  table { border-collapse: collapse; table-layout: fixed; }
  th { text-align: left; font-weight: normal; }
  .units { width: 230px; margin-left: 5px; }
  .units th { width: 101px; padding: 0 0 0 4px; }
  .units td, .units th { height: 21px; border-bottom: 1px solid #55606b; border-right: 1px solid #55606b; }
  .units tr:last-child > * { border-bottom: 0; }
  .units th span { display: flex; gap: 2px; align-items: center; }
  .units td { padding: 0 0 0 5px; }

  .sel { display: flex; gap: 4px; padding: 8px 0 0 9px; }
  .pick { background: none; width: 131px; height: 26px; border-color: #55606b; }
  .sel button { width: 20px; height: 20px; border: 1px solid #525d69; }
  .ghead { display: flex; justify-content: space-between; align-items: flex-end; width: 180px; height: 49px; margin-left: 8px; padding: 0 3px 1px 5px; border-bottom: 1px solid #e5e9ec; font-weight: bold; line-height: 18px; flex: none; }
  .sel + .ghead { height: 48px; }
  .ptable { width: 181px; margin-left: 8px; }
  .ptable th { width: 67px; padding: 3px 0 0 5px; color: #dfe3e7; white-space: nowrap; border-right: 1px solid #55606b; }
  .ptable td { padding: 0 0 0 4px; color: #dfe3e7; }
  .ptable th, .ptable td { height: 25px; border-bottom: 1px solid #55606b; }
  .ptable.dim td { color: #949ba4; }
  .ptable i { display: inline-block; vertical-align: middle; margin-right: 4px; background: #f4f4f4; height: 1px; width: 45px; }
  .ptable i.ls { width: 40px; }
  .ptable i.sw { width: 10px; height: 10px; border: 1px solid #000; margin-right: 3px; }

  .status { display: flex; align-items: center; height: 26px; padding: 0 15px 0 10px; position: relative; flex: none; background: #323842; }
  output { width: 249px; height: 22px; padding-top: 4px; font: 10px/16px "Liberation Mono", monospace; color: #fff; border-bottom: 1px solid #525d69; }
  .toggles { display: flex; gap: 4px; padding: 2px 0 0 4px; flex: 1; }
  .toggles button { width: 20px; height: 20px; border: 1px solid transparent; position: relative; }
  .toggles .on { border-color: #5ab0ee; background: #50657f; }
  .toggles .dark { border-color: #5ab0ee; background: #23272e; }
  .tip { position: absolute; left: -8px; bottom: 10px; width: 92px; height: 48px; z-index: 2; color: #000; }
  .tip svg { position: absolute; inset: 0; }
  .tip > span { position: relative; display: block; padding-top: 10px; text-align: center; }
  .pointer { position: absolute; left: -83px; bottom: 13px; width: 90px; height: 60px; z-index: 1; filter: drop-shadow(1px 2px 2px #000a); }
  .end { display: flex; align-items: center; color: #8d939d; gap: 2px; }
  .scale { display: flex; gap: 3px; padding-left: 4px; align-items: center; }
  .more { display: flex; gap: 7px; padding-left: 5px; }
  .ratio { font-size: 13px; }
  .ime { position: absolute; right: 0; bottom: 0; height: 17px; width: 125px; background: #fff; color: #1f6fd6; display: flex; align-items: center; gap: 8px; font-weight: bold; font-size: 14px; line-height: 17px; overflow: hidden; }
  .ime svg { width: 16px; height: 17px; flex: none; }
  .ime .sogou { width: 32px; height: 17px; }
  .punct { width: 18px; text-align: center; }
  .mark { position: absolute; right: 9px; bottom: 8px; display: flex; opacity: 0.8; }
  .mark svg { width: 44px; height: 40px; }
  .mark div { display: flex; flex-direction: column; justify-content: space-between; }
  .mark strong { font-size: 21px; line-height: 24px; color: #2a659b; }
  .mark em { font: bold 15px/16px "Liberation Sans", sans-serif; color: #4fae5c; }
</style>
